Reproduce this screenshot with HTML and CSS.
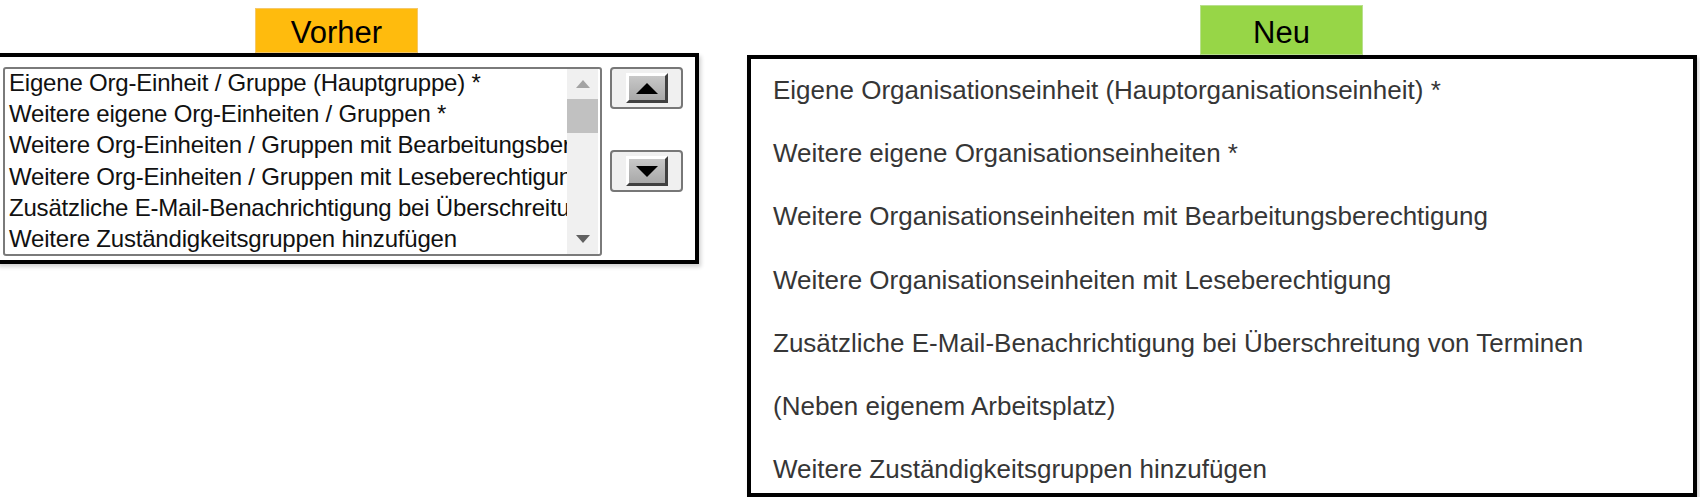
FILE: index.html
```html
<!DOCTYPE html>
<html lang="de">

<head>
    <meta charset="UTF-8">
    <title>Zuständigkeiten - Vorher / Neu</title>
    <link rel="stylesheet" href="styles.css">
</head>

<body>
    <div class="page">
        <section class="panel panel-before">
            <div class="tag tag-before">Vorher</div>
            <div class="frame frame-before">
                <div class="listbox">
                    <ul class="options">
                        <li>Eigene Org-Einheit / Gruppe (Hauptgruppe) *</li>
                        <li>Weitere eigene Org-Einheiten / Gruppen *</li>
                        <li>Weitere Org-Einheiten / Gruppen mit Bearbeitungsberechtigung</li>
                        <li>Weitere Org-Einheiten / Gruppen mit Leseberechtigung</li>
                        <li>Zusätzliche E-Mail-Benachrichtigung bei Überschreitung von Terminen</li>
                        <li>Weitere Zuständigkeitsgruppen hinzufügen</li>
                    </ul>
                    <div class="scrollbar">
                        <span class="sb-arrow sb-up">
                            <svg width="14" height="8" viewBox="0 0 14 8"><polygon points="0,8 7,0 14,8" /></svg>
                        </span>
                        <span class="sb-thumb"></span>
                        <span class="sb-track"></span>
                        <span class="sb-arrow sb-down">
                            <svg width="14" height="8" viewBox="0 0 14 8"><polygon points="0,0 14,0 7,8" /></svg>
                        </span>
                    </div>
                </div>
                <div class="movers">
                    <button class="mover">
                        <span class="bevel">
                            <svg width="22" height="11" viewBox="0 0 22 11"><polygon points="0,11 11,0 22,11" /></svg>
                        </span>
                    </button>
                    <button class="mover">
                        <span class="bevel">
                            <svg width="22" height="11" viewBox="0 0 22 11"><polygon points="0,0 22,0 11,11" /></svg>
                        </span>
                    </button>
                </div>
            </div>
        </section>

        <section class="panel panel-after">
            <div class="tag tag-after">Neu</div>
            <div class="frame frame-after">
                <ul class="entries">
                    <li>Eigene Organisationseinheit (Hauptorganisationseinheit) *</li>
                    <li>Weitere eigene Organisationseinheiten *</li>
                    <li>Weitere Organisationseinheiten mit Bearbeitungsberechtigung</li>
                    <li>Weitere Organisationseinheiten mit Leseberechtigung</li>
                    <li>Zusätzliche E-Mail-Benachrichtigung bei Überschreitung von Terminen</li>
                    <li>(Neben eigenem Arbeitsplatz)</li>
                    <li>Weitere Zuständigkeitsgruppen hinzufügen</li>
                </ul>
            </div>
        </section>
    </div>
</body>

</html>
```

FILE: styles.css
```css
body {
    margin: 0;
    font-family: "Liberation Sans", Arial, sans-serif;
    background: #fff;
    overflow: hidden;
}

.page {
    display: flex;
    align-items: flex-start;
}

.panel {
    display: flex;
    flex-direction: column;
}

.panel-before {
    width: 703px;
    margin-left: -4px;
    padding-top: 8px;
}

.panel-after {
    width: 950px;
    margin-left: 48px;
    padding-top: 5px;
}

.tag {
    font-size: 31px;
    color: #000;
    text-align: center;
    box-sizing: border-box;
}

.tag-before {
    width: 163px;
    height: 45px;
    line-height: 47px;
    margin-left: 259px;
    background-color: #ffbb0d;
    border: 1px solid #f5c86a;
}

.tag-after {
    width: 163px;
    height: 50px;
    line-height: 54px;
    margin-left: 453px;
    background-color: #97d647;
    border: 1px solid #b9e08e;
}

.frame {
    border: 4px solid #000;
    background: #fff;
    box-shadow: 2px 3px 4px rgba(0, 0, 0, 0.18);
}

/* old listbox dialog */
.frame-before {
    height: 193px;
    display: flex;
    gap: 8px;
    padding: 10px 12px 0 3px;
    box-sizing: content-box;
}

.listbox {
    width: 597px;
    height: 185px;
    border: 2px solid #7a7a7a;
    border-radius: 3px;
    display: flex;
    overflow: hidden;
}

.options {
    flex: 1;
    list-style: none;
    margin: -2px 0 0;
    padding: 0 0 0 4px;
    overflow: hidden;
    white-space: nowrap;
    font-size: 24px;
    letter-spacing: -0.2px;
    line-height: 31.2px;
    color: #111;
}

.scrollbar {
    width: 31px;
    margin-right: 2px;
    background: #f0f0f0;
    display: flex;
    flex-direction: column;
}

.sb-arrow {
    height: 30px;
    display: flex;
    align-items: center;
    justify-content: center;
}

.sb-up {
    fill: #a3a3a3;
}

.sb-down {
    fill: #606060;
}

.sb-thumb {
    height: 34px;
    background: #c1c1c1;
}

.sb-track {
    flex: 1;
}

.movers {
    display: flex;
    flex-direction: column;
    gap: 41px;
}

.mover {
    width: 73px;
    height: 42px;
    padding: 0;
    border: 2px solid #777;
    border-radius: 4px;
    background: #f0f0f0;
    display: flex;
    align-items: center;
    justify-content: center;
}

.bevel {
    width: 42px;
    height: 30px;
    box-sizing: border-box;
    border-top: 3px solid #fff;
    border-left: 3px solid #fff;
    border-right: 3px solid #404040;
    border-bottom: 3px solid #404040;
    background: linear-gradient(#c8c8c8, #a8a8a8);
    display: flex;
    align-items: center;
    justify-content: center;
    fill: #000;
}

/* new plain list */
.frame-after {
    height: 434px;
    overflow: hidden;
}

.entries {
    list-style: none;
    margin: 0;
    padding: 0 0 0 22px;
    font-size: 26px;
    line-height: 63.2px;
    color: #363636;
    white-space: nowrap;
}
```
